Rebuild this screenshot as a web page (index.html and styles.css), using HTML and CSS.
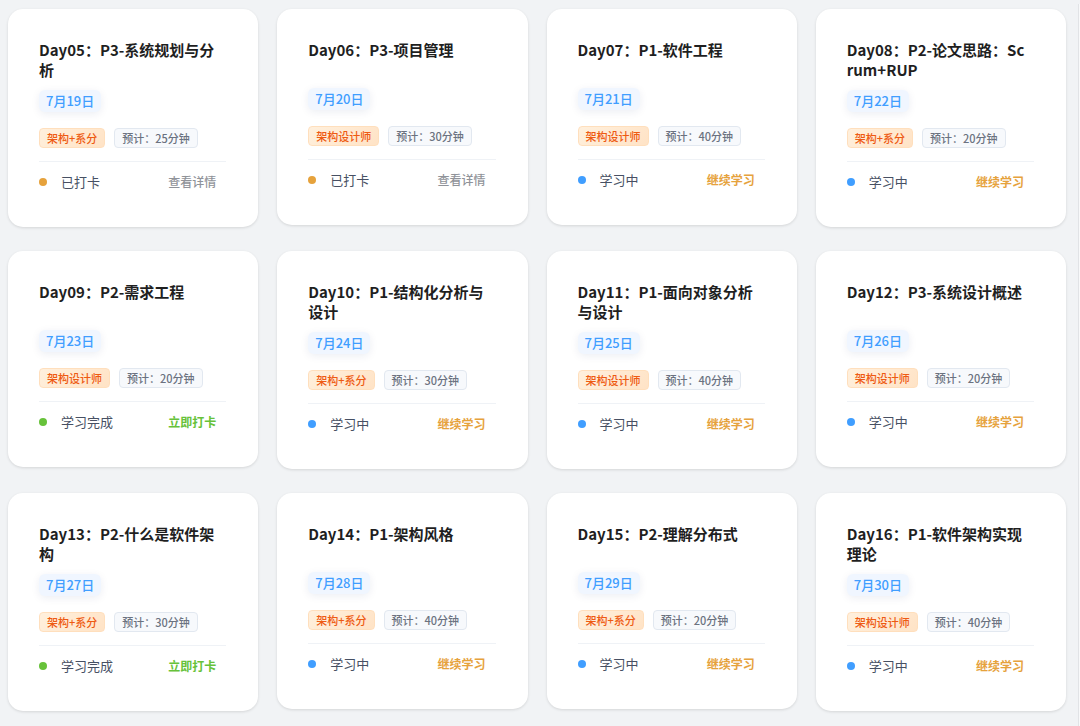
FILE: index.html
```
<!DOCTYPE html>
<html lang="zh-CN">
<head>
<meta charset="utf-8">
<title>学习计划</title>
<link rel="stylesheet" href="styles.css">
</head>
<body>
<main class="plan">
<article class="card"><h2 class="title">Day05：P3-系统规划与分析</h2><time class="date">7月19日</time><div class="tags"><span class="tag tag-role">架构+系分</span><span class="tag tag-time">预计：25分钟</span></div><footer class="foot"><span class="status checked">已打卡</span><button class="action detail" type="button">查看详情</button></footer></article>
<article class="card"><h2 class="title">Day06：P3-项目管理</h2><time class="date">7月20日</time><div class="tags"><span class="tag tag-role">架构设计师</span><span class="tag tag-time">预计：30分钟</span></div><footer class="foot"><span class="status checked">已打卡</span><button class="action detail" type="button">查看详情</button></footer></article>
<article class="card"><h2 class="title">Day07：P1-软件工程</h2><time class="date">7月21日</time><div class="tags"><span class="tag tag-role">架构设计师</span><span class="tag tag-time">预计：40分钟</span></div><footer class="foot"><span class="status learning">学习中</span><button class="action resume" type="button">继续学习</button></footer></article>
<article class="card"><h2 class="title">Day08：P2-论文思路：Scrum+RUP</h2><time class="date">7月22日</time><div class="tags"><span class="tag tag-role">架构+系分</span><span class="tag tag-time">预计：20分钟</span></div><footer class="foot"><span class="status learning">学习中</span><button class="action resume" type="button">继续学习</button></footer></article>
<article class="card"><h2 class="title">Day09：P2-需求工程</h2><time class="date">7月23日</time><div class="tags"><span class="tag tag-role">架构设计师</span><span class="tag tag-time">预计：20分钟</span></div><footer class="foot"><span class="status done">学习完成</span><button class="action punch" type="button">立即打卡</button></footer></article>
<article class="card"><h2 class="title">Day10：P1-结构化分析与设计</h2><time class="date">7月24日</time><div class="tags"><span class="tag tag-role">架构+系分</span><span class="tag tag-time">预计：30分钟</span></div><footer class="foot"><span class="status learning">学习中</span><button class="action resume" type="button">继续学习</button></footer></article>
<article class="card"><h2 class="title">Day11：P1-面向对象分析与设计</h2><time class="date">7月25日</time><div class="tags"><span class="tag tag-role">架构设计师</span><span class="tag tag-time">预计：40分钟</span></div><footer class="foot"><span class="status learning">学习中</span><button class="action resume" type="button">继续学习</button></footer></article>
<article class="card"><h2 class="title">Day12：P3-系统设计概述</h2><time class="date">7月26日</time><div class="tags"><span class="tag tag-role">架构设计师</span><span class="tag tag-time">预计：20分钟</span></div><footer class="foot"><span class="status learning">学习中</span><button class="action resume" type="button">继续学习</button></footer></article>
<article class="card"><h2 class="title">Day13：P2-什么是软件架构</h2><time class="date">7月27日</time><div class="tags"><span class="tag tag-role">架构+系分</span><span class="tag tag-time">预计：30分钟</span></div><footer class="foot"><span class="status done">学习完成</span><button class="action punch" type="button">立即打卡</button></footer></article>
<article class="card"><h2 class="title">Day14：P1-架构风格</h2><time class="date">7月28日</time><div class="tags"><span class="tag tag-role">架构+系分</span><span class="tag tag-time">预计：40分钟</span></div><footer class="foot"><span class="status learning">学习中</span><button class="action resume" type="button">继续学习</button></footer></article>
<article class="card"><h2 class="title">Day15：P2-理解分布式</h2><time class="date">7月29日</time><div class="tags"><span class="tag tag-role">架构+系分</span><span class="tag tag-time">预计：20分钟</span></div><footer class="foot"><span class="status learning">学习中</span><button class="action resume" type="button">继续学习</button></footer></article>
<article class="card"><h2 class="title">Day16：P1-软件架构实现理论</h2><time class="date">7月30日</time><div class="tags"><span class="tag tag-role">架构设计师</span><span class="tag tag-time">预计：40分钟</span></div><footer class="foot"><span class="status learning">学习中</span><button class="action resume" type="button">继续学习</button></footer></article>
</main>
<div class="rail"></div>
</body>
</html>
```
FILE: styles.css
```
* { box-sizing: border-box; }
body {
  display: flex;
  min-height: 100vh;
  margin: 0;
  background: #f1f3f5;
  font-family: "Noto Sans CJK SC", "Noto Sans", sans-serif;
}
.plan {
  display: grid;
  flex: 1;
  grid-template-columns: repeat(4, minmax(0, 1fr));
  align-content: start;
  align-items: start;
  gap: 24px 19px;
  padding: 9px 12px 12px 8px;
}
.rail {
  width: 2px;
  margin-top: 4px;
  border-left: 1px solid #e1e3e6;
  background: #f8f9fa;
}
.card {
  display: flex;
  flex-direction: column;
  align-items: flex-start;
  padding: 31px 32px 35px 31px;
  background: #fff;
  border-radius: 15px;
  box-shadow: 0 1px 3px rgba(0, 0, 0, 0.12);
}
.title {
  min-height: 38px;
  margin: 0 0 10px;
  padding-right: 6px;
  color: #1f1f1f;
  font-size: 15px;
  font-weight: 700;
  line-height: 20px;
  word-break: break-all;
}
.date {
  padding: 0 7px;
  background: #f0f6ff;
  border-radius: 6px;
  box-shadow: 0 2px 8px rgba(0, 40, 100, 0.08);
  color: #409eff;
  font-size: 13px;
  font-weight: 500;
  line-height: 22px;
}
.tags {
  display: flex;
  gap: 9px;
  margin-top: 16px;
}
.tag {
  padding: 0 7px;
  border: 1px solid;
  border-radius: 4px;
  font-size: 11px;
  font-weight: 500;
  line-height: 18px;
}
.tag-role {
  background: linear-gradient(135deg, #fff0dd, #ffe3c6);
  border-color: #ffdfbd;
  color: #ee5a12;
}
.tag-time {
  background: #f7f9fc;
  border-color: #e2e8f0;
  color: #6b7280;
}
.foot {
  display: flex;
  align-items: center;
  justify-content: space-between;
  width: 100%;
  margin-top: 13px;
  padding: 10px 10px 0 0;
  border-top: 1px solid #eff2f6;
}
.status {
  display: flex;
  align-items: center;
  gap: 14px;
  color: #475063;
  font-size: 13px;
  line-height: 20px;
}
.status::before {
  content: "";
  width: 8px;
  height: 8px;
  border-radius: 50%;
  background: currentColor;
}
.checked::before { background: #e6a23c; }
.learning::before { background: #409eff; }
.done::before { background: #67c23a; }
.action {
  padding: 0;
  border: 0;
  background: none;
  font-family: inherit;
  font-size: 12px;
  font-weight: 500;
  line-height: 18px;
  cursor: pointer;
}
.detail { color: #909399; }
.resume { color: #e6a23c; font-weight: 700; }
.punch { color: #67c23a; font-weight: 700; }
```
